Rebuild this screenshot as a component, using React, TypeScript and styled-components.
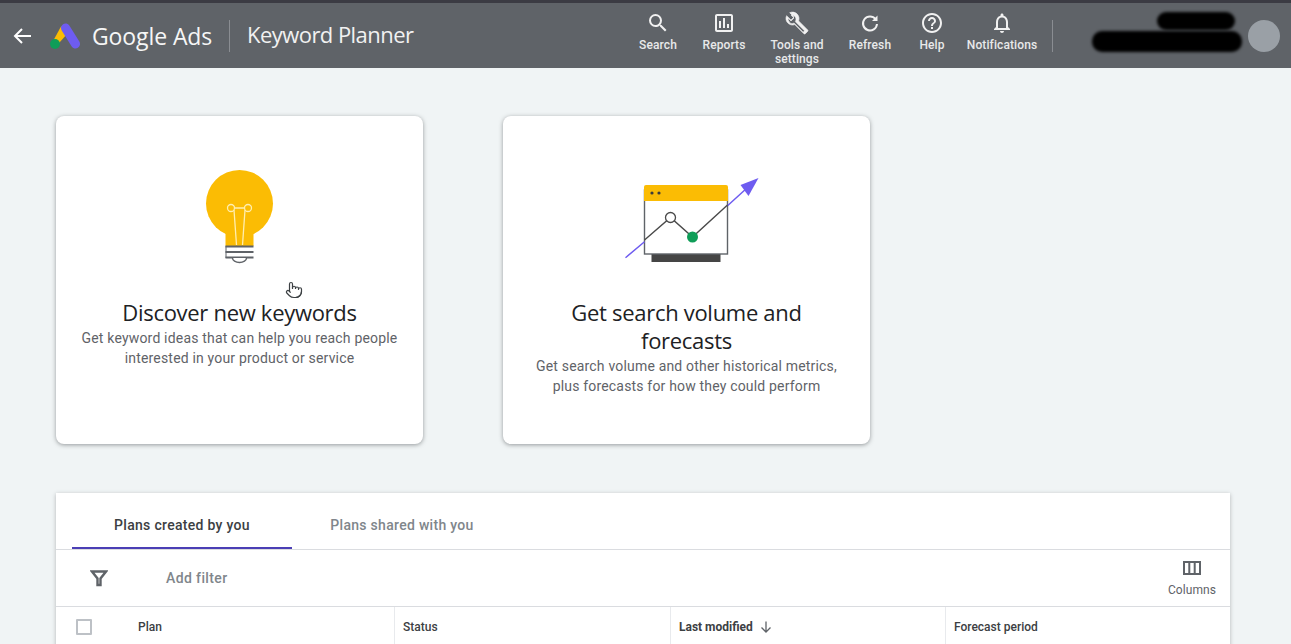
import styled, { createGlobalStyle } from 'styled-components';
import { Pointer } from 'lucide-react';

const GlobalStyle = createGlobalStyle`
  html, body {
    margin: 0;
    height: 644px;
    overflow: hidden;
    background: #f0f4f5;
    font-family: Roboto, "Liberation Sans", sans-serif;
  }
`;

const TopStrip = styled.div`
  height: 3px;
  background: #3b3b43;
`;

const Header = styled.header`
  display: flex;
  align-items: center;
  height: 65px;
  background: #5f6368;
  color: #fff;
`;

const BackButton = styled.div`
  display: flex;
  flex: none;
  width: 50px;
  padding-left: 12px;
  box-sizing: border-box;
`;

const Brand = styled.div`
  display: flex;
  align-items: center;
  gap: 12px;
  flex: none;
  width: 179px;
  height: 32px;
  border-right: 1px solid #8a8d92;
`;

const BrandName = styled.span`
  font-family: "Open Sans", Roboto, sans-serif;
  font-size: 23px;
  letter-spacing: -0.1px;
  color: #f6f6f6;
`;

const PageTitle = styled.div`
  flex: none;
  width: 378px;
  margin-left: 17px;
  padding-bottom: 3px;
  font-family: "Open Sans", Roboto, sans-serif;
  font-size: 22px;
  letter-spacing: -0.55px;
  color: #f1f1f1;
`;

const Nav = styled.nav`
  display: flex;
  align-items: flex-start;
  height: 65px;
  padding-top: 5px;
  box-sizing: border-box;
`;

const NavItem = styled.div<{ $w: number }>`
  width: ${(p) => p.$w}px;
  display: flex;
  flex-direction: column;
  align-items: center;
  text-align: center;
  font-size: 12px;
  font-weight: 500;
  line-height: 14px;
  letter-spacing: 0.1px;
  color: #e8e9ea;
`;

const NavIcon = styled.div`
  height: 30px;
  display: flex;
  align-items: center;
  justify-content: center;
`;

const HeaderRule = styled.div`
  width: 1px;
  height: 32px;
  background: #8a8d92;
  margin-left: 9px;
`;

const Account = styled.div`
  position: relative;
  flex: 1;
  height: 65px;
`;

const Scribble = styled.div`
  position: absolute;
  background: #000;
  border-radius: 10px;
  filter: blur(1.5px);
`;

const Avatar = styled.div`
  position: absolute;
  left: 195px;
  top: 17px;
  width: 32px;
  height: 32px;
  border-radius: 50%;
  background: #9aa0a6;
`;

const Main = styled.main`
  padding: 48px 61px 0 56px;
`;

const Cards = styled.div`
  display: flex;
  gap: 80px;
`;

const Card = styled.div`
  position: relative;
  width: 367px;
  height: 328px;
  box-sizing: border-box;
  background: #fff;
  border-radius: 8px;
  box-shadow: 0 1px 4px rgba(60, 64, 67, 0.5);
  display: flex;
  flex-direction: column;
  align-items: center;
  text-align: center;
  padding: 54px 20px 0;
`;

const Cursor = styled.div`
  position: absolute;
  left: 229px;
  top: 165px;
  display: flex;
  color: #3c4043;
`;

const Illustration = styled.div`
  height: 128px;
  display: flex;
  justify-content: center;
  flex: none;
`;

const CardTitle = styled.h2`
  margin: 0 0 2px;
  font-family: "Open Sans", Roboto, sans-serif;
  font-size: 22px;
  font-weight: 400;
  line-height: 28px;
  letter-spacing: -0.3px;
  color: #202124;
  max-width: 290px;
`;

const CardText = styled.p`
  margin: 0;
  font-size: 14px;
  line-height: 20px;
  letter-spacing: 0.18px;
  color: #5f6368;
  max-width: 322px;
`;

const TablePanel = styled.section`
  margin-top: 49px;
  background: #fff;
  box-shadow: 0 1px 4px rgba(60, 64, 67, 0.35);
`;

const Tabs = styled.div`
  display: flex;
  height: 56px;
  padding-left: 16px;
  border-bottom: 1px solid #dadce0;
`;

const Tab = styled.div<{ $active?: boolean }>`
  width: 220px;
  box-sizing: border-box;
  height: 56px;
  padding-top: 9px;
  display: flex;
  align-items: center;
  justify-content: center;
  font-size: 14px;
  font-weight: 500;
  letter-spacing: 0.3px;
  color: ${(p) => (p.$active ? '#3c4043' : '#80868b')};
  border-bottom: 2px solid ${(p) => (p.$active ? '#4b3fb5' : 'transparent')};
`;

const FilterBar = styled.div`
  display: flex;
  align-items: center;
  height: 56px;
  padding-left: 34px;
  border-bottom: 1px solid #dadce0;
`;

const AddFilter = styled.span`
  margin-left: 58px;
  font-size: 14px;
  font-weight: 500;
  letter-spacing: 0.38px;
  color: #80868b;
`;

const ColumnsButton = styled.div`
  margin-left: auto;
  width: 76px;
  padding-top: 2px;
  display: flex;
  flex-direction: column;
  align-items: center;
  gap: 8px;
  font-size: 12px;
  letter-spacing: 0.1px;
  color: #5f6368;
`;

const HeadRow = styled.div`
  display: grid;
  grid-template-columns: 338px 276px 275px 1fr;
  height: 40px;
`;

const HeadCell = styled.div<{ $bold?: boolean }>`
  display: flex;
  align-items: center;
  gap: 6px;
  padding-left: 8px;
  font-size: 12px;
  font-weight: ${(p) => (p.$bold ? 700 : 500)};
  color: #3c4043;
  border-left: 1px solid #e8eaed;

  &:first-child {
    border-left: 0;
    padding-left: 20px;
  }
`;

const Checkbox = styled.div`
  width: 12px;
  height: 12px;
  border: 2px solid #bdc1c6;
  border-radius: 1px;
  margin-right: 40px;
  flex: none;
`;

function AdsLogo() {
  return (
    <svg width="30" height="26" viewBox="0 0 30 26">
      <path d="M11 3.500 L2 20 H9 L18 10 L15 3.500 Z" fill="#fbbc04" />
      <path d="M15.500 5 L25.500 21" stroke="#6e5cf0" strokeWidth="9" strokeLinecap="round" />
      <circle cx="5" cy="21" r="5" fill="#0f9d58" />
    </svg>
  );
}

function Bulb() {
  return (
    <svg width="70" height="94" viewBox="0.500 0 70 94">
      <circle cx="35" cy="33.500" r="33.500" fill="#fbbc04" />
      <rect x="21" y="50" width="28" height="26" fill="#fbbc04" />
      <g fill="none" stroke="#ffeeb0" strokeWidth="1.300">
        <circle cx="26.500" cy="38" r="3.500" />
        <circle cx="43.500" cy="38" r="3.500" />
        <path d="M30 38 H40 M29.500 40 L32 75 M40.500 40 L38 75" />
      </g>
      <path d="M21 76.500 H49 M21 82 H49 M21 87.500 H49" stroke="#5f6368" strokeWidth="2" />
      <path d="M21.500 76 V88" stroke="#5f6368" strokeWidth="1" />
      <path d="M28 88 A7 4.500 0 0 0 42 88" fill="#fff" stroke="#5f6368" strokeWidth="1.400" />
    </svg>
  );
}

function TrendChart() {
  return (
    <svg width="146" height="92" viewBox="0 0 146 92">
      <rect x="37.500" y="83" width="69" height="9" fill="#454545" />
      <rect x="30.500" y="20" width="83" height="64" fill="#fff" stroke="#5f6368" strokeWidth="1.400" />
      <path d="M11.500 87.700 L30.500 71.700 M113.500 35.700 L133 18" stroke="#6e5cf0" strokeWidth="1.500" />
      <path d="M144.500 8 L126.500 15 L134.500 26 Z" fill="#6e5cf0" />
      <path d="M30.500 70 L56.500 47.500 L78.500 67 L113.500 35" fill="none" stroke="#4a4a4a" strokeWidth="1.400" />
      <path d="M30 17 a2 2 0 0 1 2 -2 H112 a2 2 0 0 1 2 2 V31 H30 Z" fill="#fbbc04" />
      <circle cx="38" cy="23" r="1.600" fill="#3c3c3c" />
      <circle cx="45" cy="23" r="1.600" fill="#3c3c3c" />
      <circle cx="56.500" cy="47.500" r="5" fill="#fff" stroke="#4a4a4a" strokeWidth="1.300" />
      <circle cx="78.500" cy="67" r="5.500" fill="#0f9d58" />
    </svg>
  );
}

function SearchIcon() {
  return (
    <svg width="24" height="24" viewBox="0 0 24 24" fill="#f1f1f1">
      <path d="M15.500 14h-.79l-.28-.27A6.470 6.470 0 0 0 16 9.500 6.500 6.500 0 1 0 9.500 16c1.610 0 3.090-.59 4.230-1.570l.27.28v.79l5 4.990L20.490 19l-4.990-5zm-6 0C7.010 14 5 11.990 5 9.500S7.010 5 9.500 5 14 7.010 14 9.500 11.990 14 9.500 14z" />
    </svg>
  );
}

function ReportsIcon() {
  return (
    <svg width="24" height="24" viewBox="0 0 24 24" fill="#f1f1f1">
      <path d="M19 3H5c-1.100 0-2 .9-2 2v14c0 1.100.9 2 2 2h14c1.100 0 2-.9 2-2V5c0-1.100-.9-2-2-2zm0 16H5V5h14v14zM7 10h2v7H7zm4-3h2v10h-2zm4 6h2v4h-2z" />
    </svg>
  );
}

function ToolsIcon() {
  return (
    <svg width="24" height="24" viewBox="0 0 24 24" fill="#f1f1f1">
      <path d="M22.700 19l-9.100-9.100c.9-2.300.4-5-1.500-6.900-2-2-5-2.400-7.400-1.300L9 6 6 9 1.600 4.700C.4 7.100.9 10.100 2.900 12.100c1.900 1.900 4.600 2.400 6.900 1.500l9.100 9.100c.4.400 1 .4 1.400 0l2.300-2.300c.5-.4.500-1.100.1-1.400zM4.300 10.700c-1-1-1.300-2.300-1.100-3.500L6 10l3-3-2.900-2.800c1.300-.2 2.600.1 3.600 1.100 1.200 1.200 1.600 3 1 4.600l-.3.8 9.100 9.100-1.400 1.400-9.100-9.100-.8.300c-1.500.6-3.400.2-3.900-1.700z" stroke="#f1f1f1" strokeWidth="0.600" />
    </svg>
  );
}

function RefreshIcon() {
  return (
    <svg width="24" height="24" viewBox="0 0 24 24" fill="none" stroke="#f1f1f1" strokeWidth="2">
      <path d="M17.600 8.200A7 7 0 1 0 19 13" />
      <path d="M19.500 4.500V10h-5.500z" fill="#f1f1f1" stroke="none" />
    </svg>
  );
}

function HelpIcon() {
  return (
    <svg width="24" height="24" viewBox="0 0 24 24" fill="#f1f1f1">
      <path d="M11 18h2v-2h-2v2zm1-16C6.480 2 2 6.480 2 12s4.480 10 10 10 10-4.480 10-10S17.520 2 12 2zm0 18c-4.410 0-8-3.590-8-8s3.590-8 8-8 8 3.590 8 8-3.590 8-8 8zm0-14c-2.210 0-4 1.790-4 4h2c0-1.100.9-2 2-2s2 .9 2 2c0 2-3 1.750-3 5h2c0-2.250 3-2.500 3-5 0-2.210-1.790-4-4-4z" />
    </svg>
  );
}

function BellIcon() {
  return (
    <svg width="24" height="24" viewBox="0 0 24 24" fill="#f1f1f1">
      <path d="M12 22c1.100 0 2-.9 2-2h-4c0 1.100.9 2 2 2zm6-6v-5c0-3.070-1.630-5.640-4.500-6.320V4c0-.83-.67-1.500-1.500-1.500s-1.500.67-1.500 1.500v.68C7.640 5.360 6 7.920 6 11v5l-2 2v1h16v-1l-2-2zm-2 1H8v-6c0-2.480 1.510-4.500 4-4.500s4 2.020 4 4.500v6z" />
    </svg>
  );
}

export default function App() {
  return (
    <>
      <GlobalStyle />
      <TopStrip />
      <Header>
        <BackButton>
          <svg width="20" height="20" viewBox="0 0 20 20" fill="none" stroke="#fff" strokeWidth="2">
            <path d="M19 10H3M10 3l-7 7 7 7" />
          </svg>
        </BackButton>
        <Brand>
          <AdsLogo />
          <BrandName>Google Ads</BrandName>
        </Brand>
        <PageTitle>Keyword Planner</PageTitle>
        <Nav>
          <NavItem $w={66}><NavIcon><SearchIcon /></NavIcon>Search</NavItem>
          <NavItem $w={66}><NavIcon><ReportsIcon /></NavIcon>Reports</NavItem>
          <NavItem $w={80}><NavIcon><ToolsIcon /></NavIcon>Tools and settings</NavItem>
          <NavItem $w={66}><NavIcon><RefreshIcon /></NavIcon>Refresh</NavItem>
          <NavItem $w={58}><NavIcon><HelpIcon /></NavIcon>Help</NavItem>
          <NavItem $w={82}><NavIcon><BellIcon /></NavIcon>Notifications</NavItem>
        </Nav>
        <HeaderRule />
        <Account>
          <Scribble style={{ left: 104, top: 9, width: 78, height: 18 }} />
          <Scribble style={{ left: 39, top: 28, width: 150, height: 21 }} />
          <Avatar />
        </Account>
      </Header>
      <Main>
        <Cards>
          <Card>
            <Illustration><Bulb /></Illustration>
            <CardTitle>Discover new keywords</CardTitle>
            <CardText>Get keyword ideas that can help you reach people interested in your product or service</CardText>
            <Cursor><Pointer size={18} strokeWidth={1.6} /></Cursor>
          </Card>
          <Card>
            <Illustration><TrendChart /></Illustration>
            <CardTitle>Get search volume and forecasts</CardTitle>
            <CardText>Get search volume and other historical metrics, plus forecasts for how they could perform</CardText>
          </Card>
        </Cards>
        <TablePanel>
          <Tabs>
            <Tab $active>Plans created by you</Tab>
            <Tab>Plans shared with you</Tab>
          </Tabs>
          <FilterBar>
            <svg width="18" height="18" viewBox="0 0 18 18" fill="none" stroke="#5f6368" strokeWidth="2.400">
              <path d="M2 2.500H16L10.500 9.500V16H7.500V9.500Z" />
            </svg>
            <AddFilter>Add filter</AddFilter>
            <ColumnsButton>
              <svg width="18" height="14" viewBox="0 0 18 14" fill="none" stroke="#5f6368" strokeWidth="2">
                <path d="M1 1H17V13H1ZM6.300 1V13M11.700 1V13" />
              </svg>
              Columns
            </ColumnsButton>
          </FilterBar>
          <HeadRow>
            <HeadCell><Checkbox />Plan</HeadCell>
            <HeadCell>Status</HeadCell>
            <HeadCell $bold>
              Last modified
              <svg width="14" height="14" viewBox="0 0 14 14" fill="none" stroke="#5f6368" strokeWidth="1.300">
                <path d="M7 1.500V12M2.500 7.500 7 12l4.500-4.500" />
              </svg>
            </HeadCell>
            <HeadCell>Forecast period</HeadCell>
          </HeadRow>
        </TablePanel>
      </Main>
    </>
  );
}
